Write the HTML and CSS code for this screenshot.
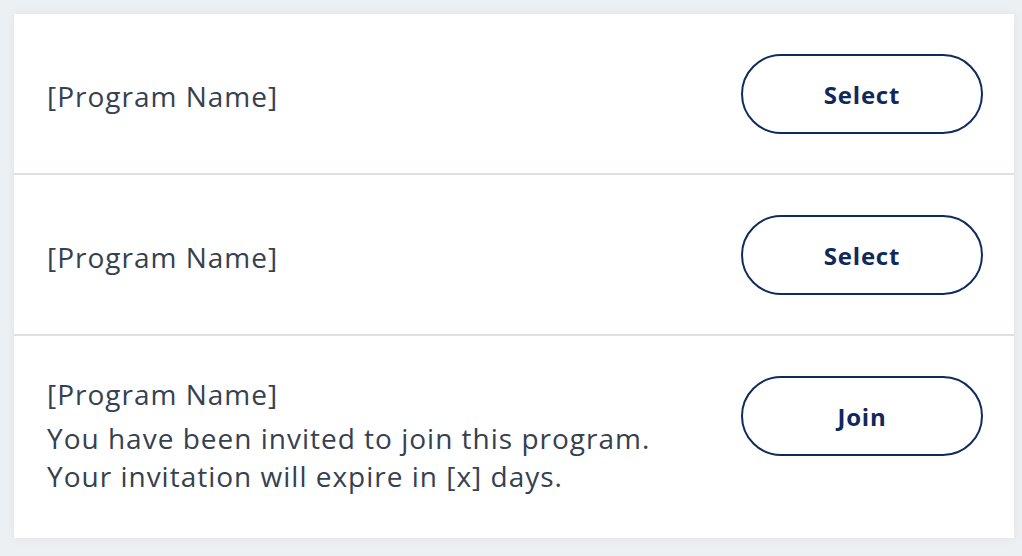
FILE: index.html
```html
<!DOCTYPE html>
<html>
<head>
<meta charset="utf-8">
<link rel="stylesheet" href="styles.css">
</head>
<body>
<div class="card">
  <div class="row">
    <div class="info"><p class="name">[Program Name]</p></div>
    <button class="btn">Select</button>
  </div>
  <div class="row">
    <div class="info"><p class="name">[Program Name]</p></div>
    <button class="btn">Select</button>
  </div>
  <div class="row row-top">
    <div class="info">
      <p class="name">[Program Name]</p>
      <p class="desc">You have been invited to join this program.<br>Your invitation will expire in [x] days.</p>
    </div>
    <button class="btn">Join</button>
  </div>
</div>
</body>
</html>
```
FILE: styles.css
```css
html, body {
  margin: 0;
  padding: 0;
}
body {
  background: #edf0f2;
  padding: 14px 8px 18px 14px;
  font-family: "Open Sans", "Noto Sans", sans-serif;
}
.card {
  background: #ffffff;
  box-shadow: 0 0 8px rgba(120, 140, 160, 0.12);
}
.row {
  display: flex;
  align-items: center;
  justify-content: space-between;
  padding: 40px 31px 39px 33px;
  border-bottom: 2px solid #dde1e5;
}
.row .info {
  padding-top: 4px;
}
.row:last-child {
  border-bottom: none;
  padding-bottom: 43px;
}
.row-top {
  align-items: flex-start;
}
.row-top .info {
  padding-top: 0;
  margin-top: -1px;
}
.info p {
  margin: 0;
  color: #36414f;
  font-size: 28px;
  letter-spacing: 1px;
  line-height: 38px;
}
.desc {
  margin-top: 6px !important;
}
.btn {
  width: 242px;
  height: 80px;
  border: 2px solid #0f2a5c;
  border-radius: 40px;
  background: #fff;
  color: #10295a;
  font-family: "Open Sans", "Noto Sans", sans-serif;
  font-weight: 700;
  font-size: 24px;
  letter-spacing: 0.8px;
  flex: none;
}
```
